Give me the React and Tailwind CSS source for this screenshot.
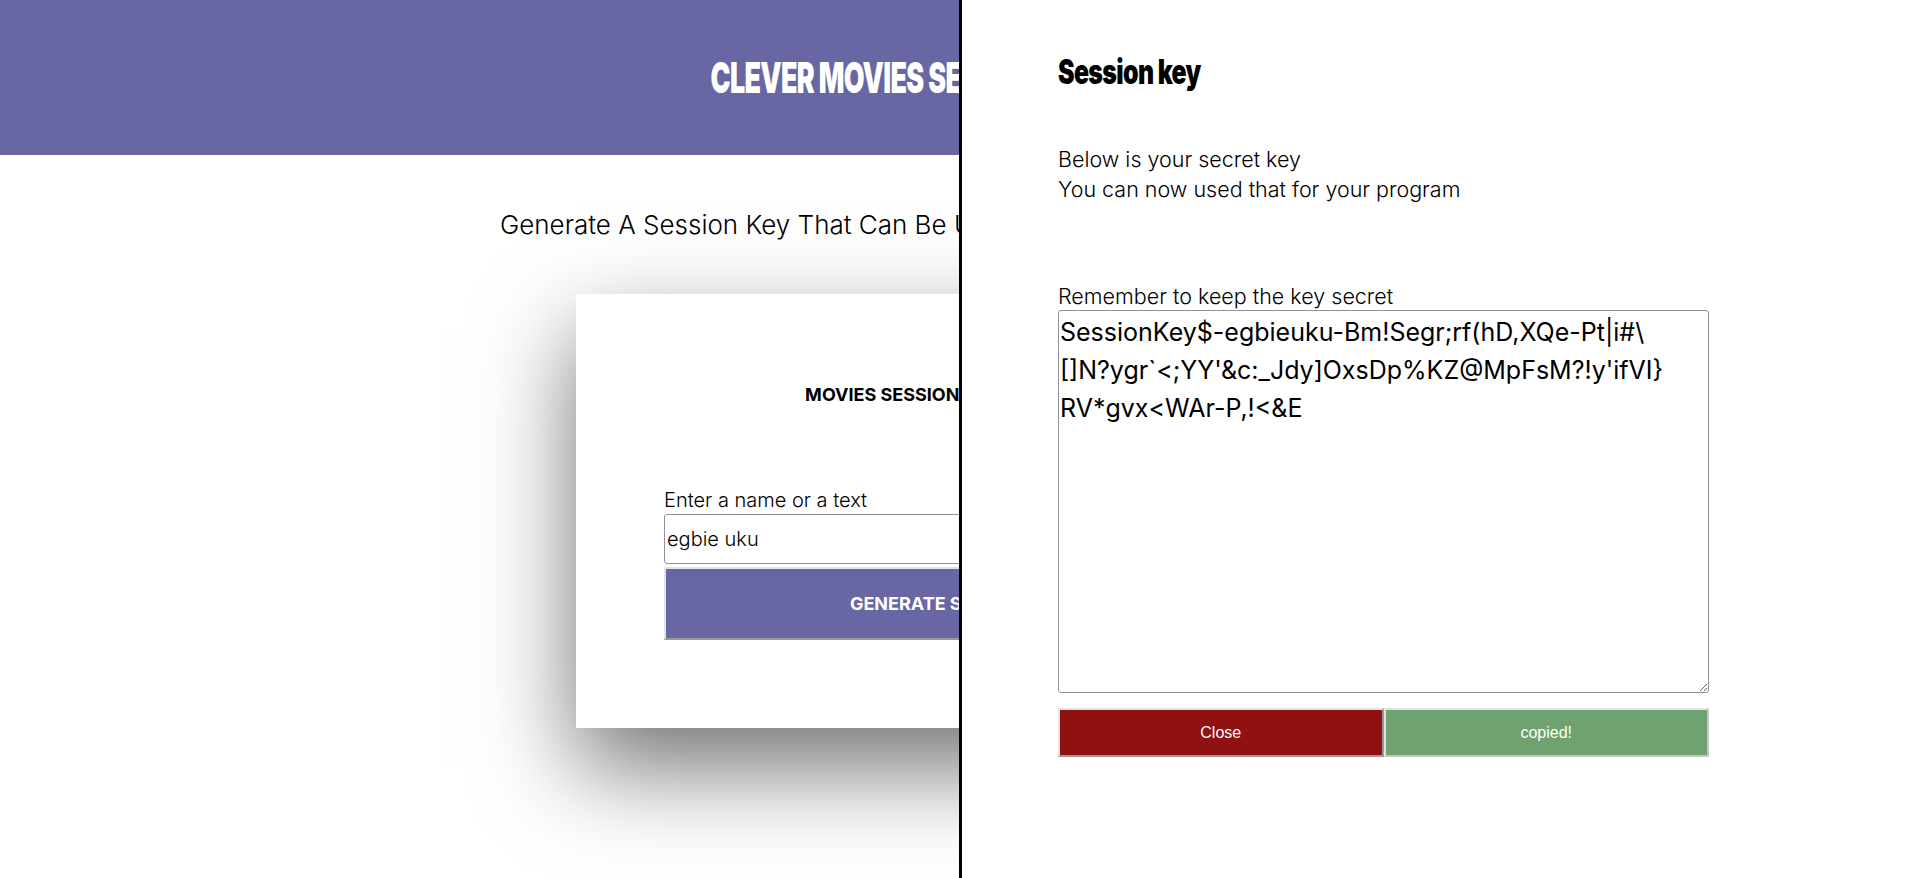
const SESSION_KEY =
  "SessionKey$-egbieuku-Bm!Segr;rf(hD,XQe-Pt|i#\\\n[]N?ygr`<;YY'&c:_Jdy]OxsDp%KZ@MpFsM?!y'ifVI}\nRV*gvx<WAr-P,!<&E";

const body = { fontFamily: "Inter, 'Noto Sans', sans-serif" };
const display = { fontFamily: "Inter, 'Liberation Sans', sans-serif" };

function Generator() {
  return (
    <div className="h-[878px] overflow-hidden bg-white" style={body}>
      <header className="flex h-[155px] items-center justify-center bg-[#6967a3]">
        <h1
          className="inline-block origin-center scale-x-[0.625] text-[43px] leading-none font-black tracking-tight text-white"
          style={display}
        >
          CLEVER MOVIES SESSION GENERATOR
        </h1>
      </header>

      <p className="mt-[50px] text-center text-[26px] leading-[40px] font-light text-black">
        Generate A Session Key That Can Be Used To Access The Movies Database
      </p>

      <div className="mx-auto mt-[49px] h-[434px] w-[768px] bg-white px-[88px] pt-[86px] shadow-[0_40px_90px_rgba(0,0,0,0.55)]">
        <h2 className="text-center text-[18px] leading-[30px] font-bold text-black">
          MOVIES SESSION KEY GENERATOR
        </h2>
        <label className="mt-[76px] block text-[20px] leading-[28px] font-light text-black">
          Enter a name or a text
        </label>
        <input
          defaultValue="egbie uku"
          className="block h-[50px] w-full rounded-[3px] border border-[#8f8f9d] px-[2px] text-[20px] font-light text-black outline-none"
        />
        <button className="mt-[3px] flex h-[73px] w-full items-center justify-center border-2 border-t-[#e3e3e3] border-l-[#e3e3e3] border-r-[#999] border-b-[#999] bg-[#6967a3] text-[18px] font-bold text-white">
          GENERATE SESSION KEY
        </button>
      </div>
    </div>
  );
}

function SessionDrawer() {
  return (
    <aside
      className="fixed inset-y-0 right-0 w-[961px] border-l-[3px] border-black bg-white pl-[96px]"
      style={body}
    >
      <h3
        className="mt-[52px] inline-block origin-left scale-x-[0.73] text-[34px] leading-[40px] font-black tracking-tight text-black"
        style={display}
      >
        Session key
      </h3>
      <div className="mt-[52px] text-[21.5px] leading-[30px] font-light text-black">
        <p>Below is your secret key</p>
        <p>You can now used that for your program</p>
      </div>
      <p className="mt-[78px] text-[21.5px] leading-[28px] font-light text-black">
        Remember to keep the key secret
      </p>
      <div className="w-[651px]">
        <textarea
          readOnly
          defaultValue={SESSION_KEY}
          className="block h-[383px] w-full rounded-[3px] border border-[#8f8f9d] px-[1px] pt-[2px] text-[25px] leading-[38px] text-black outline-none"
        />
        <div className="mt-[15px] flex">
          <button
            className="h-[49px] flex-1 border-2 border-t-[#e3e3e3] border-l-[#e3e3e3] border-r-[#999] border-b-[#999] bg-[#8f1111] text-[16px] text-white"
            style={{ fontFamily: "'Liberation Sans', sans-serif" }}
          >
            Close
          </button>
          <button
            className="h-[49px] flex-1 border-2 border-t-[#e3e3e3] border-l-[#e3e3e3] border-r-[#c4c4c4] border-b-[#c4c4c4] bg-[#6fa26f] text-[16px] text-white"
            style={{ fontFamily: "'Liberation Sans', sans-serif" }}
          >
            copied!
          </button>
        </div>
      </div>
    </aside>
  );
}

export default function App() {
  return (
    <div className="relative">
      <Generator />
      <SessionDrawer />
    </div>
  );
}
